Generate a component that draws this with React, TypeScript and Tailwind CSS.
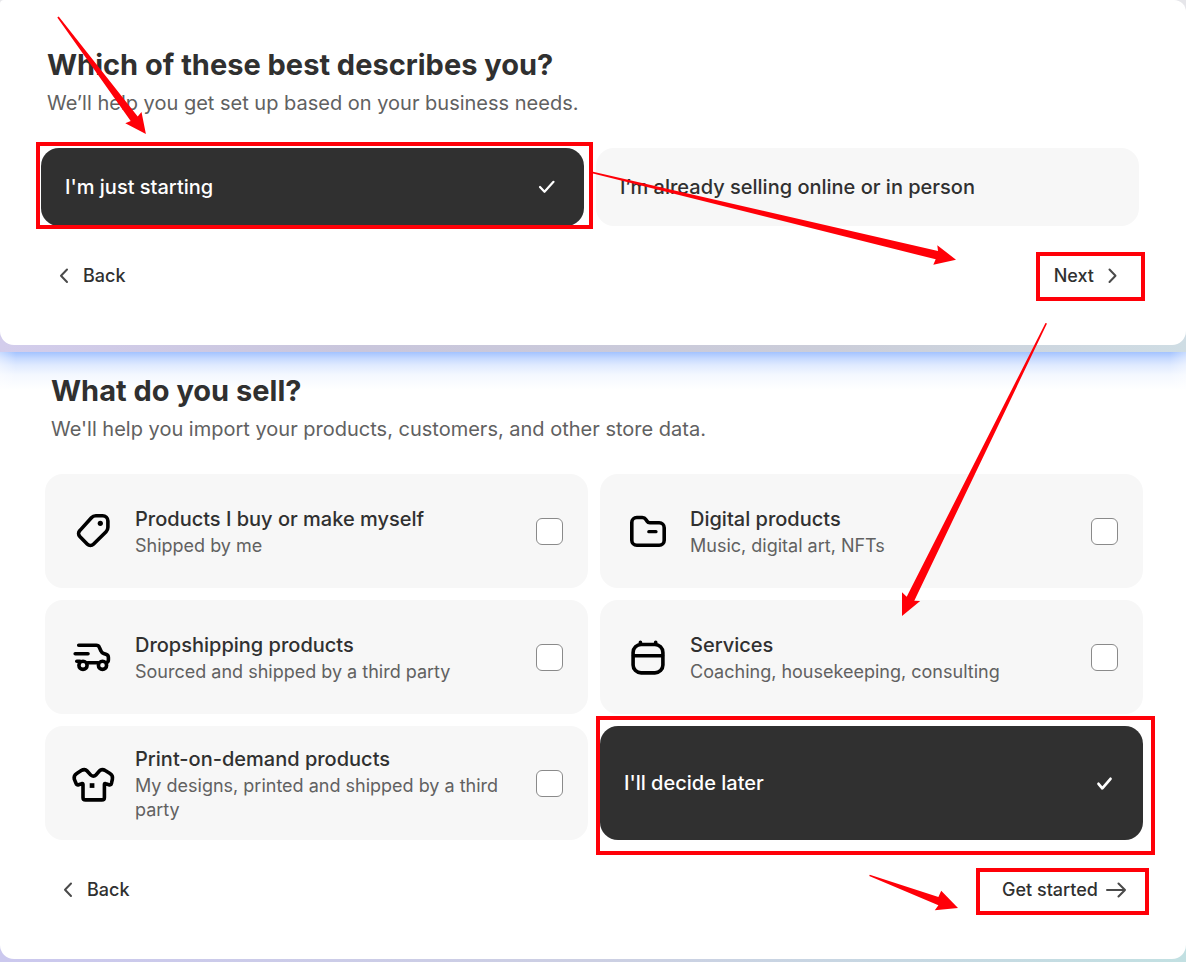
import { useState, type ReactNode } from "react";

function Glyph({ children }: { children: ReactNode }) {
  return (
    <svg
      viewBox="0 0 48 48"
      className="h-12 w-12 shrink-0 text-black"
      fill="none"
      stroke="currentColor"
      strokeWidth="3.6"
      strokeLinecap="round"
      strokeLinejoin="round"
      aria-hidden="true"
    >
      {children}
    </svg>
  );
}

const TagIcon = () => (
  <Glyph>
    <path d="M26.8 8.8H33.6a5.3 5.3 0 0 1 5.3 5.3V20.3c0 1.7-.6 3.2-1.8 4.4L24.4 37.2a4.2 4.2 0 0 1-6 0L10.8 29.6a4.3 4.3 0 0 1 0-6L22.4 10.7c1.1-1.2 2.7-1.9 4.4-1.9z" />
    <circle cx="31.3" cy="16.3" r="2.6" fill="currentColor" stroke="none" />
  </Glyph>
);

const FolderIcon = () => (
  <Glyph>
    <path d="M7.8 15.5a5 5 0 0 1 5-5h5.4c1.6 0 2.9.7 3.7 2l1.2 1.8c.6 1 1.6 1.5 2.7 1.5h9.4a5 5 0 0 1 5 5v12.4a5 5 0 0 1-5 5H12.8a5 5 0 0 1-5-5z" />
    <path d="M24.8 24.7H32" strokeWidth="3.2" />
  </Glyph>
);

const TruckIcon = () => (
  <Glyph>
    <path d="M9.7 12.2H27.2c1.7 0 2.6.7 3.2 2.2l1.7 3.8c.5 1.3 1.2 1.9 2.5 2.3l2.3.7c1.6.5 2.5 1.6 2.5 3.2v2.4c0 1.6-.7 2.6-2 2.9" />
    <path d="M6.2 20.7H19" />
    <path d="M7.8 28.3H11" />
    <path d="M18.6 29.7H28.8" />
    <circle cx="14" cy="32.3" r="4.1" />
    <circle cx="33.5" cy="32.3" r="4.1" />
  </Glyph>
);

const CalendarIcon = () => (
  <Glyph>
    <rect x="9.1" y="11.5" width="29.8" height="28.4" rx="8" />
    <path d="M9.5 22.7H38.5M16.4 9.3V11M31.7 9.3V11" />
  </Glyph>
);

const ShirtIcon = () => (
  <Glyph>
    <path d="M15.4 10.6c1 0 1.8.4 2.5 1.2l3.7 4.1c1.5 1.6 3.8 1.6 5.3 0l3.7-4.1c.7-.8 1.5-1.2 2.5-1.2 1.1 0 2.2.3 3.1.9l4.8 3c2 1.3 2.9 3.3 2.4 5.6l-.9 4.1c-.4 1.6-1.3 1.9-2.7 1.5l-3-1.1c-.9-.4-1.4 0-1.4.9V38.4c0 1.5-1 2.5-2.5 2.5H16.5c-1.5 0-2.5-1-2.5-2.5V25.5c0-.9-.6-1.3-1.4-.9l-2.9 1.1c-1.4.5-2.4.1-2.7-1.5L5.3 20.1c-.5-2.3.4-4.3 2.4-5.6l4.6-3c.9-.6 2-.9 3.1-.9z" />
    <rect x="20.7" y="24.2" width="4.7" height="4.7" fill="currentColor" stroke="none" />
  </Glyph>
);

function LineIcon({ d }: { d: string }) {
  return (
    <svg
      viewBox="0 0 20 20"
      className="h-5 w-5 shrink-0 text-[#4a4a4a]"
      fill="none"
      stroke="currentColor"
      strokeWidth="2"
      strokeLinecap="round"
      strokeLinejoin="round"
      aria-hidden="true"
    >
      <path d={d} />
    </svg>
  );
}
const LEFT = "M14 3.5L8 9.7L14 16";
const RIGHT = "M7.5 3.5L13.5 9.7L7.5 16";
const ARROW = "M1 10H19M12.5 3.5L19 10L12.5 16.5";

function Frame({ className }: { className: string }) {
  return <span aria-hidden="true" className={`pointer-events-none absolute border-4 border-[#ff0008] ${className}`} />;
}

function Heading({ title, text }: { title: string; text: string }) {
  return (
    <header className="pl-[6px]">
      <h1 className="text-[29px] leading-10 font-bold text-[#303030]">{title}</h1>
      <p className="mt-1 text-xl leading-7 text-[#616161]">{text}</p>
    </header>
  );
}

function BackButton() {
  return (
    <button type="button" className="flex h-12 items-center gap-[10px] pl-3 text-lg font-medium text-[#303030]">
      <LineIcon d={LEFT} />
      Back
    </button>
  );
}

const kinds = [
  { id: "own", title: "Products I buy or make myself", text: "Shipped by me", Icon: TagIcon },
  { id: "digital", title: "Digital products", text: "Music, digital art, NFTs", Icon: FolderIcon },
  { id: "drop", title: "Dropshipping products", text: "Sourced and shipped by a third party", Icon: TruckIcon },
  { id: "services", title: "Services", text: "Coaching, housekeeping, consulting", Icon: CalendarIcon },
  { id: "print", title: "Print-on-demand products", text: "My designs, printed and shipped by a third party", Icon: ShirtIcon },
];

export default function App() {
  const [starting, setStarting] = useState(true);
  const [later, setLater] = useState(true);
  const on = "bg-[#303030] text-white";
  const off = "bg-[#f7f7f7] text-[#303030]";

  return (
    <main className="relative font-['Inter',sans-serif]">
      <div className="bg-[linear-gradient(180deg,#e6e6ea_20px,transparent_40px),linear-gradient(90deg,#d3cdec,#c9c6dc_30%,#cbcdd9_70%,#cfdde4)] pb-[7px]">
        <section className="rounded-tl-[4px] rounded-tr-[12px] rounded-b-[14px] bg-white pt-[45px] pr-[47px] pb-[45px] pl-[41px]">
          <Heading title="Which of these best describes you?" text="We’ll help you get set up based on your business needs." />
          <div className="mt-[31px] grid grid-cols-2 gap-3">
            <button
              type="button"
              aria-pressed={starting}
              onClick={() => setStarting(true)}
              className={`relative flex h-[78px] items-center justify-between rounded-[18px] px-6 text-left text-xl font-medium ${starting ? on : off}`}
            >
              I'm just starting
              {starting && (
                <svg viewBox="0 0 28 28" className="h-7 w-7" fill="none" stroke="currentColor" strokeWidth="2.2" strokeLinecap="round" strokeLinejoin="round" aria-hidden="true">
                  <path d="M8 14L12.5 18.8L21.5 8.8" />
                </svg>
              )}
              <Frame className="-top-[6px] -right-[9px] -bottom-[3px] -left-[5px]" />
            </button>
            <button
              type="button"
              aria-pressed={!starting}
              onClick={() => setStarting(false)}
              className={`flex h-[78px] items-center rounded-[18px] px-6 text-left text-xl font-medium ${starting ? off : on}`}
            >
              I’m already selling online or in person
            </button>
          </div>
          <footer className="mt-[26px] flex items-center justify-between">
            <BackButton />
            <button type="button" className="relative flex h-12 items-center gap-2 px-[17px] text-lg font-medium text-[#303030]">
              Next
              <LineIcon d={RIGHT} />
              <Frame className="top-0 -right-[6px] -bottom-px -left-px" />
            </button>
          </footer>
        </section>
      </div>

      <div className="bg-[linear-gradient(90deg,#cbc8ee,#cccfe3_50%,#c2e0e2)] pb-[3px]">
        <section className="rounded-b-[14px] bg-white bg-[linear-gradient(90deg,#ffffff66,#ffffff00_16px,#ffffff00_calc(100%-16px),#ffffff66),linear-gradient(180deg,#a3c3ff,#c4d8ff_6px,#dfeaff_13px,#f4f8ff_23px,#ffffff_38px)] pt-[19px] pr-[43px] pb-[45px] pl-[45px]">
          <Heading title="What do you sell?" text="We'll help you import your products, customers, and other store data." />
          <div className="mt-[31px] grid grid-cols-2 gap-3">
            {kinds.map(({ id, title, text, Icon }) => (
              <label key={id} htmlFor={id} className="flex min-h-[114px] cursor-pointer items-center rounded-[18px] bg-[#f7f7f7] pr-[25px] pl-6">
                <Icon />
                <span className="ml-[18px] flex-1">
                  <span className="block text-xl leading-[30px] font-medium text-[#303030]">{title}</span>
                  <span className="block text-lg leading-6 text-[#616161]">{text}</span>
                </span>
                <input
                  id={id}
                  type="checkbox"
                  className="ml-6 h-[27px] w-[27px] shrink-0 appearance-none rounded-md border border-[#8a8a8a] bg-white checked:bg-[#303030]"
                />
              </label>
            ))}
            <button
              type="button"
              aria-pressed={later}
              onClick={() => setLater(!later)}
              className={`relative flex min-h-[114px] items-center justify-between rounded-[18px] px-6 text-left text-xl font-medium ${later ? on : off}`}
            >
              I'll decide later
              {later && (
                <svg viewBox="0 0 28 28" className="h-7 w-7" fill="none" stroke="currentColor" strokeWidth="2.7" strokeLinecap="round" strokeLinejoin="round" aria-hidden="true">
                  <path d="M7.5 14.8L11.3 19.3L19.5 9.8" />
                </svg>
              )}
              <Frame className="-top-[10px] -right-3 -bottom-[15px] -left-1" />
            </button>
          </div>
          <footer className="mt-[26px] flex items-center justify-between">
            <BackButton />
            <button type="button" className="relative flex h-12 items-center gap-2 px-[17px] text-lg font-medium text-[#303030]">
              Get started
              <LineIcon d={ARROW} />
              <Frame className="top-[2px] -right-[6px] -bottom-px -left-[9px]" />
            </button>
          </footer>
        </section>
      </div>

      <svg viewBox="0 0 1186 962" className="pointer-events-none absolute top-0 left-0 w-full" fill="#ff0008" aria-hidden="true">
        <path d="M57.3 17.5L58.7 16.6L137.7 116.5L141.5 112L145.9 134L125.3 123.3L130.7 121z" />
        <path d="M593 171.8L938 251L937.3 245.3L956 259.7L933.3 264.7L935.7 259.3L593 173.6z" />
        <path d="M1045.5 323L1047 323.6L914.3 600.7L920.2 601L902 616L902 592.3L906.7 596.7z" />
        <path d="M869.2 876L869.8 874.8L938.4 897L941.2 890.8L958 908L934.8 910.2L938.4 905.3z" />
      </svg>
    </main>
  );
}
